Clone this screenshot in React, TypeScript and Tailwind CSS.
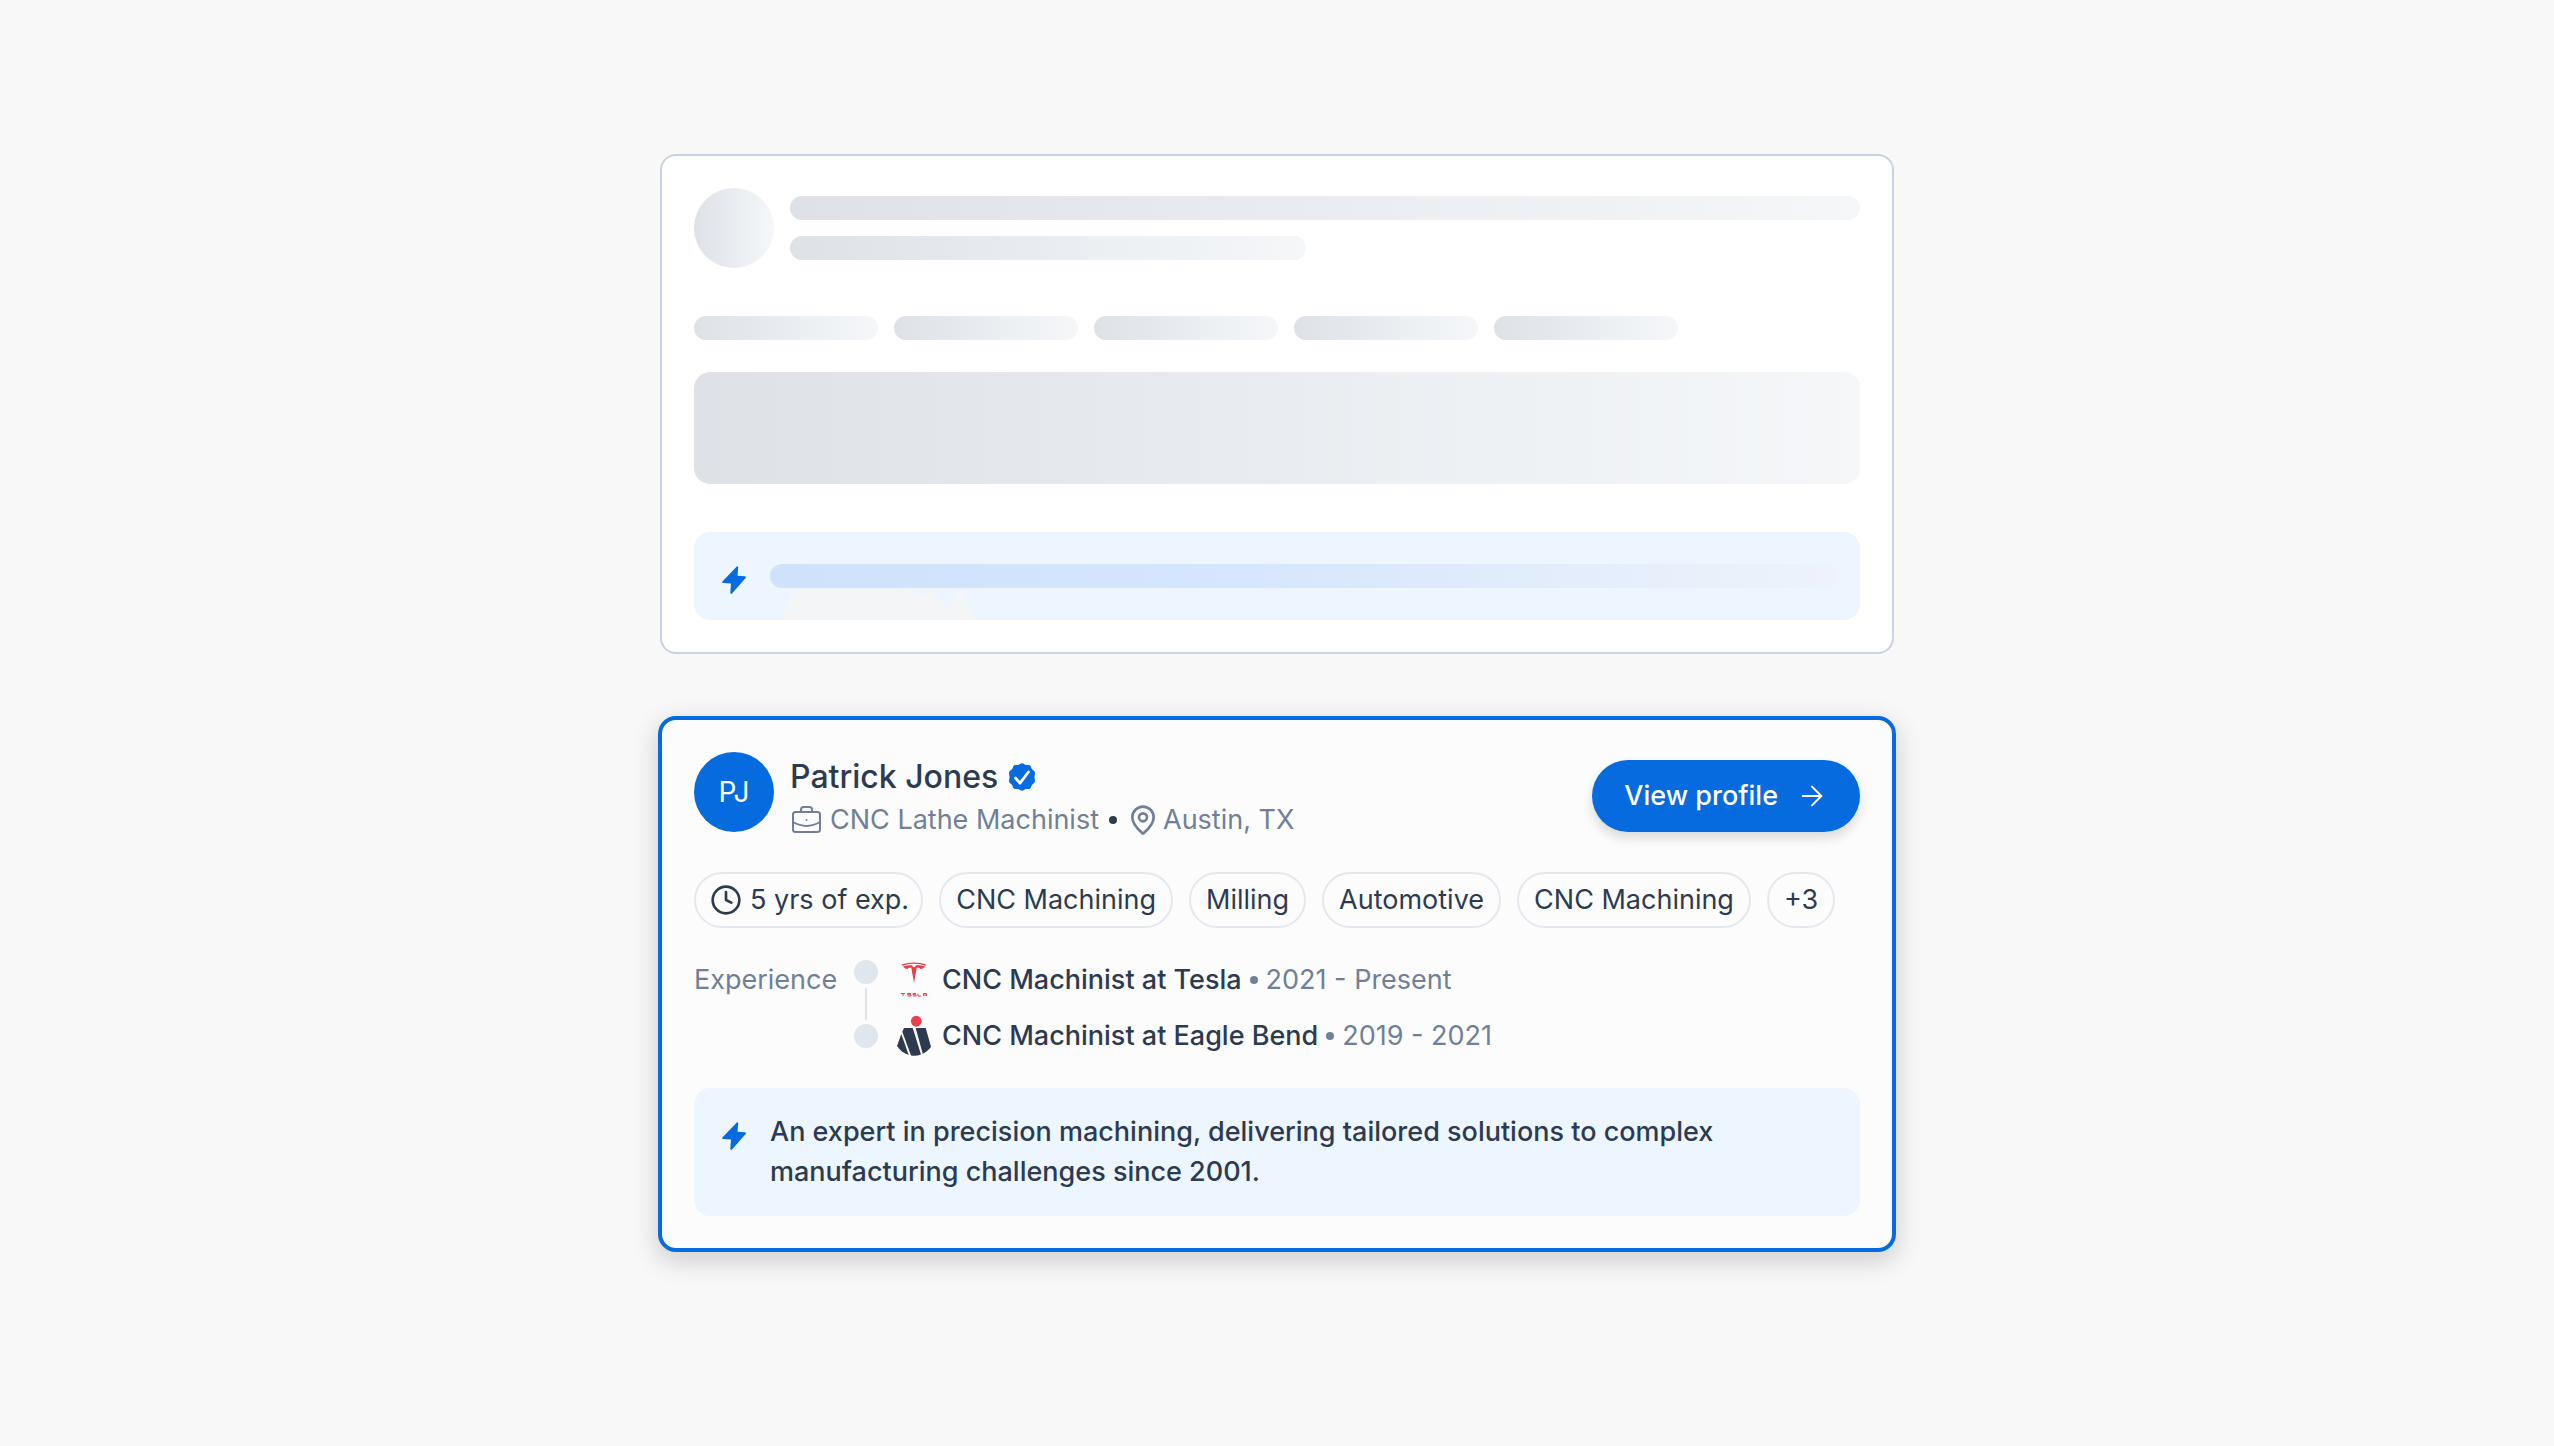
import { ArrowRight, Clock, MapPin } from 'lucide-react'
import type { ReactNode } from 'react'

interface Job {
  title: string
  dates: string
  logo: ReactNode
}

function BoltIcon() {
  return (
    <svg viewBox="0 0 32 32" className="size-8 shrink-0 fill-[#056bdf]" aria-hidden="true">
      <path d="M18.6 2.8 4.6 17.2c-.8.9-.4 1.8.8 1.9l7.6.5-.7 9.2c0 1.2.9 1.5 1.7.7l13.6-15.4c.8-.9.4-1.8-.8-1.9l-7.3-.5.7-8.2c0-1.2-.8-1.5-1.6-.7Z" />
    </svg>
  )
}

function VerifiedIcon() {
  return (
    <svg viewBox="0 0 28 28" className="size-7" role="img" aria-label="Verified">
      <path
        d="M14 .2c1.600 0 2.400 1.300 3.800 1.700 1.400.3 2.900-.3 4.200.6 1.300.9 1.100 2.500 1.900 3.600.8 1.200 2.600 1.700 3 3.200.4 1.500-.5 3.100-.5 4.700s.9 3.200.5 4.700c-.4 1.500-2.200 2-3 3.200-.8 1.100-.6 2.700-1.900 3.600-1.300.9-2.800.3-4.200.6-1.400.4-2.200 1.700-3.800 1.700s-2.400-1.300-3.800-1.700c-1.400-.3-2.900.3-4.200-.6-1.300-.9-1.100-2.500-1.900-3.600-.8-1.200-2.600-1.700-3-3.200-.4-1.500.5-3.100.5-4.700s-.9-3.200-.5-4.700c.4-1.500 2.200-2 3-3.200.8-1.100.6-2.700 1.900-3.600 1.300-.9 2.800-.3 4.200-.6C11.600 1.500 12.400.2 14 .2Z"
        className="fill-[#056bdf]"
      />
      <path d="m7.500 15 4.500 5.200L20.500 9" className="fill-none stroke-white" strokeWidth="2.800" strokeLinecap="round" strokeLinejoin="round" />
    </svg>
  )
}

function BriefcaseIcon() {
  return (
    <svg viewBox="0 0 32 32" className="size-8 fill-none stroke-current" strokeWidth="2" strokeLinejoin="round" aria-hidden="true">
      <rect x="3" y="8" width="27" height="20" rx="2.500" />
      <path d="M11 8V5.500A2.500 2.500 0 0 1 13.500 3h6A2.500 2.500 0 0 1 22 5.500V8" />
      <path d="M3 18c8.500 5 18.500 5 27 0" />
      <circle cx="16.500" cy="16" r="1" className="fill-current stroke-none" />
    </svg>
  )
}

function TeslaLogo() {
  return (
    <svg viewBox="0 0 40 40" className="size-10 fill-[#e8404d]" aria-hidden="true">
      <path d="M20 2.400c4.500 0 8.600.7 12.300 2.200-.3.700-.5 1-.6 1.200C28 4.400 24.200 3.700 20 3.700S12 4.400 8.300 5.800c-.2-.3-.4-.6-.6-1.200C11.400 3.100 15.500 2.400 20 2.400Z" />
      <path d="m20 23-2.700-15.300c-2.500 0-3.600.3-3.700 1.300-1.700 0-3.300-.8-4.600-2.500 2.600-1 5.300-1.500 8.200-1.600L20 7.600l2.800-2.700c2.900.1 5.600.6 8.200 1.600-1.300 1.700-2.900 2.500-4.600 2.500-.1-1-1.200-1.300-3.700-1.300L20 23Z" />
      <path
        d="M7 33.500h4m-2 0V36m8-2.500h-3.500v1.200H17v1.300h-3.500M22 33.500h-3v1.200h3V36h-3m5-2.500V36h3m2.500 0v-2.500h3V36m-3-1h3"
        className="fill-none stroke-[#e8404d]"
        strokeWidth="1"
      />
    </svg>
  )
}

function EagleBendLogo() {
  return (
    <svg viewBox="0 0 40 40" className="size-10" aria-hidden="true">
      <circle cx="22.300" cy="5.300" r="5.400" className="fill-[#e8404d]" />
      <path
        d="M7.300 18 14.700 39C10 37.500 6 34.500 3 30ZM10 12h8.700L27 38.500c-3 1.200-6.500 1.500-10 1L8.300 15.800ZM21.700 12h10L37 30.700c-2 3-5 5.500-8.300 7Z"
        className="fill-[#2d3b50]"
      />
    </svg>
  )
}

const jobs: Job[] = [
  { title: 'CNC Machinist at Tesla', dates: '2021 - Present', logo: <TeslaLogo /> },
  { title: 'CNC Machinist at Eagle Bend', dates: '2019 - 2021', logo: <EagleBendLogo /> },
]

const skills = ['CNC Machining', 'Milling', 'Automotive', 'CNC Machining', '+3']

function SkeletonCard() {
  return (
    <section aria-label="Loading candidate" className="rounded-2xl border-2 border-[#c8d2e0] bg-white p-8">
      <div className="flex gap-4">
        <div className="size-20 shrink-0 rounded-full bg-linear-to-r from-[#dee2e6] via-[#e9edf1] to-[#f5f7f9]" />
        <div className="flex flex-1 flex-col gap-4 pt-2">
          <div className="h-6 rounded-full bg-linear-to-r from-[#dee2e6] via-[#e9edf1] to-[#f5f7f9]" />
          <div className="h-6 w-[516px] rounded-full bg-linear-to-r from-[#dee2e6] via-[#e9edf1] to-[#f5f7f9]" />
        </div>
      </div>

      <div className="mt-12 flex gap-4">
        {[0, 1, 2, 3, 4].map((i) => (
          <div key={i} className="h-6 w-46 rounded-full bg-linear-to-r from-[#dee2e6] via-[#e9edf1] to-[#f5f7f9]" />
        ))}
      </div>

      <div className="mt-8 h-28 rounded-2xl bg-linear-to-r from-[#dee2e6] via-[#e9edf1] to-[#f5f7f9]" />

      <div className="relative mt-12 flex gap-5 rounded-2xl bg-[#edf5ff] px-6 pt-8 pb-6">
        <BoltIcon />
        <div className="h-6 flex-1 rounded-full bg-linear-to-r from-[#d0e2fb] via-[#d4e5fd] via-40% to-[#eef3fa]" />
        <svg viewBox="0 0 194 32" className="absolute bottom-0 left-22 h-8 w-[194px] fill-[#f4f5f7]" aria-hidden="true">
          <path d="M0 32 11 5q2-4 5-4h112q4 0 7 4 5 6 9 1 5-6 9 0l9 13q4 4 6 0l6-12q4-7 8-1 3 6 4 11l8 15Z" />
        </svg>
      </div>
    </section>
  )
}

function ProfileCard() {
  return (
    <section
      aria-label="Patrick Jones"
      className="rounded-2xl border-2 border-[#056bdf] bg-[#fcfcfc] p-8 shadow-[0_0_0_2px_#056bdf,0_8px_24px_4px_rgba(0,0,0,0.16)]"
    >
      <div className="flex items-center gap-4">
        <div className="flex size-20 shrink-0 items-center justify-center self-start rounded-full bg-[#056bdf] text-[28px] text-white">
          PJ
        </div>
        <div className="min-w-0 flex-1">
          <div className="flex h-12 items-center gap-2.5 pt-0.5">
            <h2 className="text-[32px] font-medium">Patrick Jones</h2>
            <VerifiedIcon />
          </div>
          <div className="flex h-10 items-center text-[#718096]">
            <BriefcaseIcon />
            <span className="ml-2">CNC Lathe Machinist</span>
            <span className="mx-2.5 size-2 rounded-full bg-[#2d3b50]" />
            <MapPin className="size-8" strokeWidth={2} aria-hidden="true" />
            <span className="ml-1">Austin, TX</span>
          </div>
        </div>
        <button className="flex h-18 cursor-pointer items-center gap-4.5 rounded-full bg-[#056bdf] px-8 font-medium text-white shadow-[0_6px_12px_rgba(0,0,0,0.14)]">
          View profile
          <ArrowRight className="size-8" strokeWidth={1.5} aria-hidden="true" />
        </button>
      </div>

      <ul className="mt-8 flex flex-wrap gap-4">
        <li className="flex h-14 items-center gap-2 rounded-full border-2 border-[#e4e8ee] pr-3 pl-3.5">
          <Clock className="size-8" strokeWidth={2} aria-hidden="true" />
          5 yrs of exp.
        </li>
        {skills.map((skill, i) => (
          <li key={i} className="flex h-14 items-center rounded-full border-2 border-[#e4e8ee] px-[15px]">
            {skill}
          </li>
        ))}
      </ul>

      <div className="mt-8 flex">
        <h3 className="w-40 text-[#718096]">Experience</h3>
        <div className="mr-4 flex flex-col items-center gap-1">
          <span className="size-6 rounded-full bg-[#e0e6ee]" />
          <span className="h-8 w-0.5 bg-[#dfe3e8]" />
          <span className="size-6 rounded-full bg-[#e0e6ee]" />
        </div>
        <ul className="flex flex-col gap-4">
          {jobs.map((job) => (
            <li key={job.title} className="flex items-center">
              {job.logo}
              <span className="ml-2 font-medium">{job.title}</span>
              <span className="mx-2 size-2 rounded-full bg-[#718096]" />
              <span className="text-[#718096]">{job.dates}</span>
            </li>
          ))}
        </ul>
      </div>

      <div className="mt-8 flex gap-5 rounded-2xl bg-[#edf5ff] p-6">
        <div className="pt-2">
          <BoltIcon />
        </div>
        <p className="max-w-[1000px] font-medium">
          An expert in precision machining, delivering tailored solutions to complex manufacturing challenges since 2001.
        </p>
      </div>
    </section>
  )
}

export default function App() {
  return (
    <main className="min-h-screen bg-[#f8f8f8] px-6 pt-[154px] pb-48 font-[Inter,sans-serif] text-[27px] leading-10 text-[#2d3b50]">
      <div className="mx-auto flex max-w-[1234px] flex-col gap-16">
        <SkeletonCard />
        <ProfileCard />
      </div>
    </main>
  )
}
